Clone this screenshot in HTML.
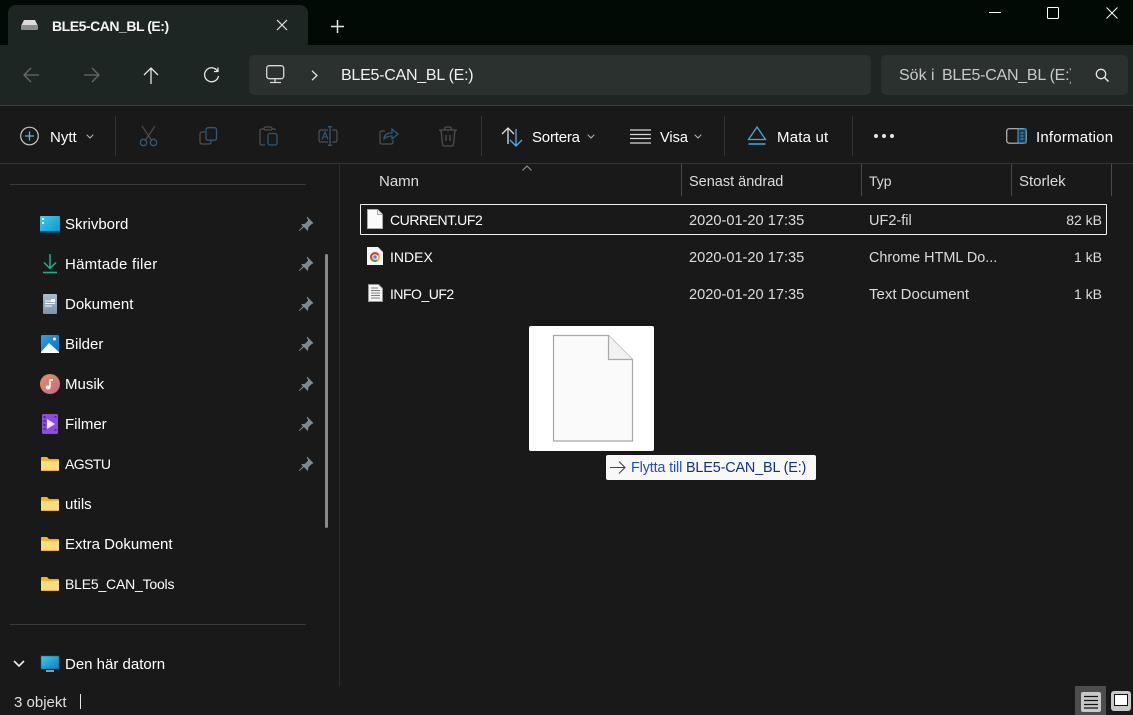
<!DOCTYPE html>
<html lang="sv"><head><meta charset="utf-8"><title>BLE5-CAN_BL (E:)</title>
<style>
html,body{margin:0;padding:0;width:1133px;height:715px;overflow:hidden;background:#191919}
body{position:relative;font-family:"Liberation Sans",sans-serif;color:#fff;font-size:14px}
.a{position:absolute}
.t{position:absolute;white-space:nowrap;line-height:20px;height:20px;font-size:15px;color:#fff}
.g{color:#dcdcdc}
svg{position:absolute;overflow:visible}
.sep{position:absolute;top:116px;width:1px;height:40px;background:#333}
.hs{position:absolute;top:164px;width:1px;height:32px;background:#4a4a4a}
</style></head><body>
<div class="a" style="left:0;top:0;width:1133px;height:45px;background:#000b05"></div>
<div class="a" style="left:0;top:45px;width:1133px;height:60px;background:#1e2623"></div>
<div class="a" style="left:8px;top:5px;width:300px;height:40px;background:#1e2623;border-radius:8px 8px 0 0"></div>
<div class="a" style="left:0;top:105px;width:1133px;height:1px;background:#3d3f3e"></div>
<div class="a" style="left:0;top:163px;width:1133px;height:1px;background:#363636"></div>
<div class="a" style="left:249px;top:55px;width:622px;height:40px;background:#2a312e;border-radius:5px"></div>
<div class="a" style="left:881px;top:55px;width:247px;height:40px;background:#2a312e;border-radius:5px"></div>

<svg style="left:20px;top:19px" width="19" height="12" viewBox="0 0 19 12"><path d="M4 1h11l3 6H1z" fill="#dcdcdc"/><rect x="1" y="6" width="17" height="5" rx="1" fill="#8d8d8d"/><rect x="3" y="8" width="2" height="1" fill="#4c4"/></svg>
<div class="t" style="left:52px;top:16px;font-size:14px;font-weight:bold;letter-spacing:-.47px;color:#f4f4f4">BLE5-CAN_BL (E:)</div>
<svg style="left:276px;top:19px" width="12" height="12" viewBox="0 0 12 12"><path d="M1 1l10 10M11 1L1 11" stroke="#e8e8e8" stroke-width="1.200"/></svg>
<svg style="left:331px;top:20px" width="13" height="13" viewBox="0 0 13 13"><path d="M6.500 0v13M0 6.500h13" stroke="#e8e8e8" stroke-width="1.500"/></svg>
<svg style="left:989px;top:12px" width="13" height="2"><path d="M0 .5h12" stroke="#fff"/></svg>
<svg style="left:1047px;top:7px" width="12" height="12"><rect x=".5" y=".5" width="11" height="11" rx="1" fill="none" stroke="#fff"/></svg>
<svg style="left:1106px;top:7px" width="12" height="12" viewBox="0 0 12 12"><path d="M.5.500l11 11M11.500.500l-11 11" stroke="#fff"/></svg>

<svg style="left:23px;top:67px" width="17" height="16" viewBox="0 0 17 16"><path d="M16 8H1M8 1L1 8l7 7" fill="none" stroke="#666b69" stroke-width="1.300"/></svg>
<svg style="left:83px;top:67px" width="17" height="16" viewBox="0 0 17 16"><path d="M1 8h15M9 1l7 7-7 7" fill="none" stroke="#666b69" stroke-width="1.300"/></svg>
<svg style="left:143px;top:67px" width="16" height="17" viewBox="0 0 16 17"><path d="M8 17V1M1 8l7-7 7 7" fill="none" stroke="#e6e6e6" stroke-width="1.300"/></svg>
<svg style="left:203px;top:67px" width="17" height="17" viewBox="0 0 17 17"><path d="M14.500 4A7 7 0 1 0 15.500 9M15 .5V4.500H11" fill="none" stroke="#e6e6e6" stroke-width="1.300"/></svg>
<svg style="left:266px;top:65px" width="20" height="19" viewBox="0 0 20 19"><rect x=".7" y=".7" width="17" height="13" rx="2.500" fill="none" stroke="#d8d8d8" stroke-width="1.300"/><path d="M9 14v3M4 17.500h11" stroke="#d8d8d8" stroke-width="1.300"/></svg>
<svg style="left:311px;top:70px" width="7" height="11" viewBox="0 0 7 11"><path d="M1 .8l5 4.700-5 4.700" fill="none" stroke="#e8e8e8" stroke-width="1.300"/></svg>
<div class="t" style="left:341px;top:66px;font-size:16px;letter-spacing:-.25px;color:#f2f2f2">BLE5-CAN_BL (E:)</div>
<div class="t" style="left:899px;top:66px;font-size:16px;color:#c8cbca">Sök i</div>
<div class="a" style="left:942px;top:66px;width:129px;height:20px;overflow:hidden"><div class="t" style="left:0;top:0;font-size:16px;letter-spacing:-.25px;color:#c8cbca">BLE5-CAN_BL (E:)</div></div>
<svg style="left:1095px;top:68px" width="16" height="15" viewBox="0 0 16 15"><circle cx="6" cy="6" r="4.700" fill="none" stroke="#e6e6e6" stroke-width="1.300"/><path d="M9.500 9.500l4 4" stroke="#e6e6e6" stroke-width="1.500"/></svg>

<svg style="left:20px;top:126px" width="20" height="20" viewBox="0 0 20 20"><circle cx="9.500" cy="10" r="8.800" fill="none" stroke="#c8c8c8" stroke-width="1.200"/><path d="M9.500 5.500v9M5 10h9" stroke="#4cb8f0" stroke-width="1.300"/></svg>
<div class="t" style="left:50px;top:128px">Nytt</div>
<svg style="left:86px;top:134px" width="8" height="5" viewBox="0 0 8 5"><path d="M.7.700L4 4 7.300.700" fill="none" stroke="#bbb"/></svg>
<div class="sep" style="left:115px"></div>
<div class="sep" style="left:481px"></div>
<div class="sep" style="left:724px"></div>
<div class="sep" style="left:852px"></div>

<svg style="left:139px;top:126px" width="19" height="21" viewBox="0 0 19 21"><path d="M3 0l10 15M16 0L6 15" stroke="#4c4f50" stroke-width="1.200" fill="none"/><circle cx="4.500" cy="16.500" r="3.200" fill="none" stroke="#2d5a78" stroke-width="1.300"/><circle cx="14.500" cy="16.500" r="3.200" fill="none" stroke="#2d5a78" stroke-width="1.300"/></svg>
<svg style="left:199px;top:127px" width="19" height="19" viewBox="0 0 19 19"><rect x="7" y=".7" width="10.500" height="12.500" rx="2" fill="none" stroke="#2d5a78" stroke-width="1.300"/><path d="M6 5H3Q1 5 1 7v8q0 2 2 2h7q2 0 2-2v-1" fill="none" stroke="#4c4f50" stroke-width="1.300"/></svg>
<svg style="left:259px;top:126px" width="19" height="20" viewBox="0 0 19 20"><path d="M5 3H3Q1 3 1 5v12q0 2 2 2h3M13 3h2q1 0 1.500 1" fill="none" stroke="#4c4f50" stroke-width="1.300"/><rect x="5" y="1" width="8" height="3" rx="1.500" fill="none" stroke="#4c4f50" stroke-width="1.200"/><rect x="9" y="7.500" width="9" height="11.500" rx="2" fill="none" stroke="#2d5a78" stroke-width="1.300"/></svg>
<svg style="left:318px;top:126px" width="20" height="20" viewBox="0 0 20 20"><path d="M10 4H3Q1 4 1 6v8q0 2 2 2h7M14 4h3q2 0 2 2v8q0 2-2 2h-3" fill="none" stroke="#4c4f50" stroke-width="1.300"/><path d="M12 .5v19M10 .7h4M10 19.300h4" stroke="#2d5a78" stroke-width="1.300"/><path d="M4 13.500L7 6l3 7.500M5 11h4" fill="none" stroke="#2d5a78" stroke-width="1.100"/></svg>
<svg style="left:379px;top:127px" width="20" height="19" viewBox="0 0 20 19"><path d="M6 4H3Q1 4 1 6v9q0 2 2 2h9q2 0 2-2v-2" fill="none" stroke="#4c4f50" stroke-width="1.300"/><path d="M5 12c0-4 3-6 8-6V2l6 5-6 5V9c-4 0-6 1-8 3z" fill="none" stroke="#2d5a78" stroke-width="1.300"/></svg>
<svg style="left:439px;top:126px" width="18" height="21" viewBox="0 0 18 21"><path d="M0 4h18M6 4V2q0-1 1-1h4q1 0 1 1v2M2 4l1.500 14q.2 2 2 2h7q1.800 0 2-2L16 4" fill="none" stroke="#4c4f50" stroke-width="1.300"/><path d="M7 9v6M11 9v6" stroke="#4c4f50" stroke-width="1.300"/></svg>

<svg style="left:501px;top:127px" width="23" height="20" viewBox="0 0 23 20"><path d="M7 17V1M1 7l6-6 6 6" fill="none" stroke="#e0e0e0" stroke-width="1.300"/><path d="M15 2v17M9 13l6 6 6-6" fill="none" stroke="#4cb0e8" stroke-width="1.300"/></svg>
<div class="t" style="left:532px;top:128px;letter-spacing:-.2px">Sortera</div>
<svg style="left:587px;top:134px" width="8" height="5" viewBox="0 0 8 5"><path d="M.7.700L4 4 7.300.700" fill="none" stroke="#bbb"/></svg>
<svg style="left:630px;top:129px" width="21" height="15" viewBox="0 0 21 15"><path d="M0 1h21M0 5.500h21M0 9.500h21M0 14h21" stroke="#d8d8d8" stroke-width="1.300"/></svg>
<div class="t" style="left:660px;top:128px;font-size:14.500px">Visa</div>
<svg style="left:694px;top:134px" width="8" height="5" viewBox="0 0 8 5"><path d="M.7.700L4 4 7.300.700" fill="none" stroke="#bbb"/></svg>
<svg style="left:747px;top:126px" width="20" height="19" viewBox="0 0 20 19"><path d="M10 1l8.500 12.500H1.500z" fill="none" stroke="#45a9e0" stroke-width="1.300"/><path d="M1.500 18h17" stroke="#45a9e0" stroke-width="1.600"/></svg>
<div class="t" style="left:777px;top:128px;letter-spacing:.2px">Mata ut</div>
<svg style="left:873px;top:133px" width="22" height="6"><circle cx="3" cy="3" r="2" fill="#e8e8e8"/><circle cx="11" cy="3" r="2" fill="#e8e8e8"/><circle cx="19" cy="3" r="2" fill="#e8e8e8"/></svg>
<svg style="left:1006px;top:128px" width="21" height="16" viewBox="0 0 21 16"><rect x=".7" y=".7" width="19.500" height="14.500" rx="2.500" fill="none" stroke="#bdbdbd" stroke-width="1.200"/><rect x="12" y="1" width="8" height="14" fill="#1e3a4e" stroke="#45a9e0"/><path d="M14.500 5h3M14.500 8h3M14.500 11h3" stroke="#45a9e0"/></svg>
<div class="t" style="left:1036px;top:128px;letter-spacing:.2px">Information</div>

<div class="a" style="left:10px;top:184px;width:296px;height:1px;background:#3a3a3a"></div>
<div class="a" style="left:10px;top:624px;width:296px;height:1px;background:#3a3a3a"></div>
<div class="a" style="left:325px;top:254px;width:3px;height:274px;background:#8a8a8a;border-radius:2px"></div>
<div class="a" style="left:339px;top:164px;width:1px;height:522px;background:#2b2b2b"></div>

<svg style="left:40px;top:216px" width="20" height="17" viewBox="0 0 20 17"><defs><linearGradient id="d" x1="0" y1="0" x2="1" y2="1"><stop offset="0" stop-color="#3cd0ef"/><stop offset="1" stop-color="#1490c8"/></linearGradient></defs><rect width="20" height="16" rx="1" fill="url(#d)"/><rect y="15" width="20" height="1.500" fill="#0a5f88"/><rect x="2" y="2" width="2" height="2" fill="#fff"/><rect x="2" y="6" width="2" height="2" fill="#fff"/></svg>
<div class="t" style="left:65px;top:215px">Skrivbord</div>
<svg style="left:43px;top:254px" width="14" height="20" viewBox="0 0 14 20"><path d="M7 0v14M1 8.500l6 6 6-6" fill="none" stroke="#21b08e" stroke-width="1.500"/><path d="M0 18.500h14" stroke="#21b08e" stroke-width="1.600"/></svg>
<div class="t" style="left:65px;top:255px;letter-spacing:.25px">Hämtade filer</div>
<svg style="left:43px;top:294px" width="14" height="20" viewBox="0 0 14 20"><defs><linearGradient id="e" x1="0" y1="0" x2="0" y2="1"><stop offset="0" stop-color="#a7bdd0"/><stop offset="1" stop-color="#7d93aa"/></linearGradient></defs><rect width="14" height="20" rx="1" fill="url(#e)"/><path d="M2 7h10M2 9.500h10M2 12h7" stroke="#fff"/><rect x="8" y="5" width="4" height="3" fill="#fff"/></svg>
<div class="t" style="left:65px;top:295px">Dokument</div>
<svg style="left:41px;top:335px" width="18" height="18" viewBox="0 0 18 18"><defs><linearGradient id="f" x1="0" y1="0" x2="1" y2="1"><stop offset="0" stop-color="#2ba0e8"/><stop offset="1" stop-color="#0f6cc0"/></linearGradient></defs><rect width="18" height="18" rx="1.500" fill="url(#f)"/><path d="M0 17l8-9 10 9v1H0z" fill="#fff"/><circle cx="13.500" cy="4" r="1.500" fill="#fff"/></svg>
<div class="t" style="left:65px;top:335px">Bilder</div>
<svg style="left:40px;top:374px" width="20" height="20" viewBox="0 0 20 20"><defs><linearGradient id="h" x1="0" y1="0" x2="1" y2="1"><stop offset="0" stop-color="#ec8f5a"/><stop offset="1" stop-color="#c06a8e"/></linearGradient></defs><circle cx="10" cy="10" r="10" fill="url(#h)"/><path d="M10 5v8" stroke="#fff" stroke-width="1.500"/><path d="M10 5h3v2h-3z" fill="#fff"/><ellipse cx="8" cy="13.500" rx="2.500" ry="2" fill="#fff"/></svg>
<div class="t" style="left:65px;top:375px">Musik</div>
<svg style="left:42px;top:414px" width="16" height="20" viewBox="0 0 16 20"><rect width="16" height="20" rx="1.500" fill="#8a4fe0"/><path d="M5 5l8 5-8 5z" fill="#efe8ff"/><path d="M1.500 3h2M1.500 7h2M1.500 11h2M1.500 15h2M12.500 3h2M12.500 16h2" stroke="#3c2470" stroke-width="1.500"/></svg>
<div class="t" style="left:65px;top:415px">Filmer</div>

<svg width="0" height="0" style="left:0;top:0"><defs>
<g id="fo"><path d="M0 1q0-1 1-1h5l2 2h9q1 0 1 1v1H0z" fill="#f3b51e"/><path d="M0 4h18v9q0 1-1 1H1q-1 0-1-1z" fill="#fbdc81"/><path d="M0 13h18q0 1-1 1H1q-1 0-1-1z" fill="#e6b23c"/></g>
<g id="pin"><path d="M8 0l6 6-1.500.800-3.300 3.200-.500 3.500-6-6 3.500-.500 3.200-3.300zM4 9.500L0 14l4.500-4z" fill="#7f8a90" stroke="#7f8a90" stroke-width=".6"/></g>
</defs></svg>

<svg style="left:41px;top:457px" width="18" height="14"><use href="#fo"/></svg>
<div class="t" style="left:65px;top:454px;font-size:14px;letter-spacing:-.55px">AGSTU</div>
<svg style="left:41px;top:497px" width="18" height="14"><use href="#fo"/></svg>
<div class="t" style="left:65px;top:495px;font-size:15px">utils</div>
<svg style="left:41px;top:537px" width="18" height="14"><use href="#fo"/></svg>
<div class="t" style="left:65px;top:535px">Extra Dokument</div>
<svg style="left:41px;top:577px" width="18" height="14"><use href="#fo"/></svg>
<div class="t" style="left:65px;top:574px;font-size:14px;letter-spacing:-.2px">BLE5_CAN_Tools</div>

<svg style="left:299px;top:217px" width="14" height="14"><use href="#pin"/></svg>
<svg style="left:299px;top:257px" width="14" height="14"><use href="#pin"/></svg>
<svg style="left:299px;top:297px" width="14" height="14"><use href="#pin"/></svg>
<svg style="left:299px;top:337px" width="14" height="14"><use href="#pin"/></svg>
<svg style="left:299px;top:377px" width="14" height="14"><use href="#pin"/></svg>
<svg style="left:299px;top:417px" width="14" height="14"><use href="#pin"/></svg>
<svg style="left:299px;top:457px" width="14" height="14"><use href="#pin"/></svg>

<svg style="left:13px;top:660px" width="12" height="8" viewBox="0 0 12 8"><path d="M1 1l5 5 5-5" fill="none" stroke="#eee" stroke-width="1.600"/></svg>
<svg style="left:41px;top:656px" width="18" height="16" viewBox="0 0 18 16"><defs><linearGradient id="m" x1="0" y1="0" x2="1" y2="1"><stop offset="0" stop-color="#3cd0ef"/><stop offset="1" stop-color="#1278b8"/></linearGradient></defs><rect width="18" height="13" fill="url(#m)" stroke="#0f5f88" stroke-width=".6"/><rect x="5" y="14" width="8" height="2" fill="#8d9aa5"/></svg>
<div class="t" style="left:65px;top:655px">Den här datorn</div>

<div class="hs" style="left:681px"></div><div class="hs" style="left:861px"></div><div class="hs" style="left:1011px"></div><div class="hs" style="left:1111px"></div>
<svg style="left:522px;top:165px" width="10" height="6" viewBox="0 0 10 6"><path d="M.5 5.500L5 1l4.500 4.500" fill="none" stroke="#9a9a9a"/></svg>
<div class="t g" style="left:379px;top:172px">Namn</div>
<div class="t g" style="left:689px;top:172px;font-size:14.500px">Senast ändrad</div>
<div class="t g" style="left:869px;top:171px;font-size:14px">Typ</div>
<div class="t g" style="left:1019px;top:172px">Storlek</div>

<div class="a" style="left:360px;top:204px;width:745px;height:29px;border:1px solid #f0f0f0;border-radius:1px"></div>
<svg style="left:367px;top:209px" width="16" height="20" viewBox="0 0 16 20"><path d="M.5.500h10l5 5v14H.5z" fill="#fbfbfb" stroke="#aaa"/><path d="M10.500.500v5h5" fill="#eee" stroke="#aaa"/></svg>
<div class="t" style="left:390px;top:210px;font-size:14px;letter-spacing:-.45px">CURRENT.UF2</div>
<div class="t g" style="left:689px;top:211px;font-size:14.600px">2020-01-20 17:35</div>
<div class="t g" style="left:869px;top:211px;font-size:14.500px">UF2-fil</div>
<div class="t g" style="left:1002px;top:210px;width:100px;text-align:right;font-size:14px">82 kB</div>

<svg style="left:367px;top:247px" width="16" height="18" viewBox="0 0 16 18"><path d="M0 0h11l5 5v13H0z" fill="#f5f5f5"/><circle cx="8" cy="10" r="5" fill="#e33b2e"/><path d="M8 10L3.700 12.500A5 5 0 0 0 10.500 14.300z" fill="#2fa84f"/><path d="M8 10l4.300-2.500A5 5 0 0 1 10.500 14.300z" fill="#fbc02d"/><circle cx="8" cy="10" r="2.300" fill="#4285f4" stroke="#fff"/></svg>
<div class="t" style="left:390px;top:247px;font-size:14px">INDEX</div>
<div class="t g" style="left:689px;top:248px;font-size:14.600px">2020-01-20 17:35</div>
<div class="t g" style="left:869px;top:248px;font-size:14.400px">Chrome HTML Do...</div>
<div class="t g" style="left:1002px;top:247px;width:100px;text-align:right;font-size:14px">1 kB</div>

<svg style="left:368px;top:284px" width="15" height="18" viewBox="0 0 15 18"><path d="M.5.500h10l4 4v13H.5z" fill="#f5f5f5" stroke="#999"/><path d="M3 4h7M3 6.500h9M3 9h9M3 11.500h9M3 14h9" stroke="#7d7d7d"/></svg>
<div class="t" style="left:390px;top:284px;font-size:14px;letter-spacing:-.5px">INFO_UF2</div>
<div class="t g" style="left:689px;top:285px;font-size:14.600px">2020-01-20 17:35</div>
<div class="t g" style="left:869px;top:285px">Text Document</div>
<div class="t g" style="left:1002px;top:284px;width:100px;text-align:right;font-size:14px">1 kB</div>

<div class="a" style="left:529px;top:326px;width:125px;height:125px;background:#fff;border-radius:2px"></div>
<svg style="left:553px;top:335px" width="80" height="107" viewBox="0 0 80 107"><path d="M.5.500h55l24 24v81.500H.5z" fill="#fafafa" stroke="#a8a8a8" stroke-width="1.200"/><path d="M55.500.500v24h24" fill="#f2f2f2" stroke="#a8a8a8" stroke-width="1.200"/></svg>
<div class="a" style="left:606px;top:455px;width:210px;height:25px;background:#f8f8f8;border-radius:2px"></div>
<svg style="left:610px;top:461px" width="16" height="13" viewBox="0 0 16 13"><path d="M0 6.500h15M9 .5l6 6-6 6" fill="none" stroke="#444" stroke-width="1.100"/></svg>
<div class="t" style="left:631px;top:458px;font-size:14.400px;letter-spacing:-.15px;color:#1c50d0">Flytta till <span style="color:#12317e">BLE5-CAN_BL (E:)</span></div>

<div class="t" style="left:14px;top:693px;color:#e0e0e0">3 objekt</div>
<div class="a" style="left:80px;top:694px;width:1px;height:15px;background:#e6e6e6"></div>
<div class="a" style="left:1075px;top:686px;width:31px;height:29px;background:#4d4d4d"></div>
<div class="a" style="left:1081px;top:692px;width:20px;height:20px;background:#c8c8c8;border-radius:2px"></div>
<svg style="left:1084px;top:695px" width="14" height="14"><path d="M0 1.500h14M0 5.500h14M0 9.500h14M0 13h14" stroke="#111" stroke-width="1.200"/></svg>
<div class="a" style="left:1111px;top:691px;width:20px;height:20px;background:#c8c8c8;border-radius:3px"></div>
<div class="a" style="left:1114px;top:694px;width:12px;height:10px;background:#fff;border:1px solid #111"></div>
</body></html>
